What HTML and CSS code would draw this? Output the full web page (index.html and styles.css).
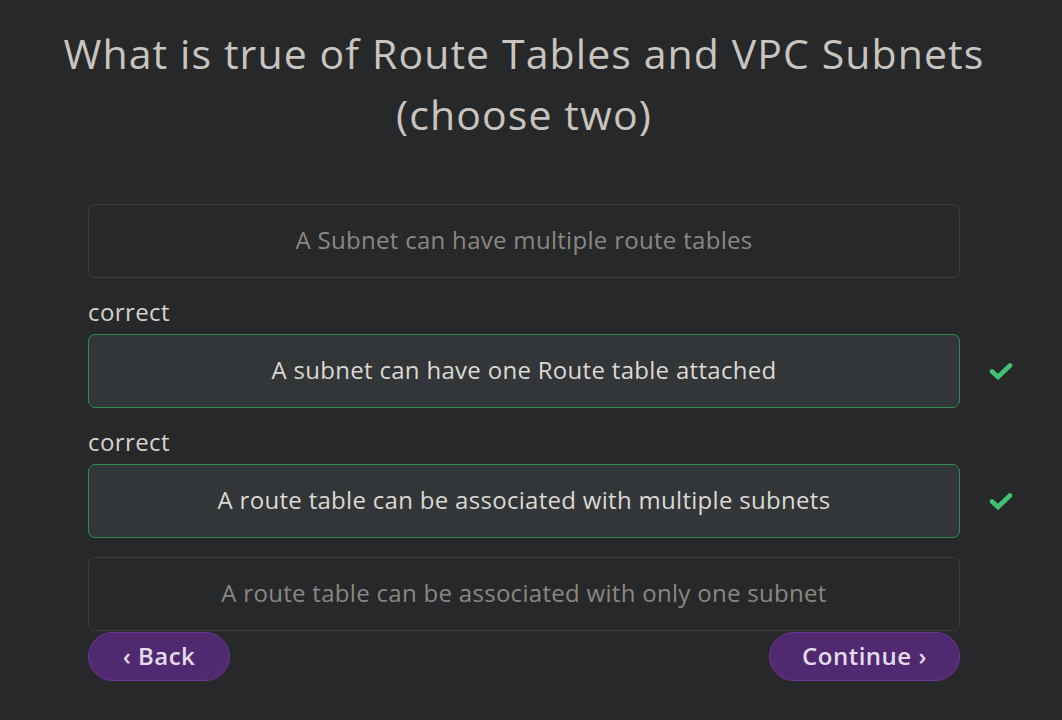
FILE: index.html
```html
<!DOCTYPE html>
<html>
<head>
<meta charset="utf-8">
<link rel="stylesheet" href="styles.css">
</head>
<body>
<main class="quiz">
  <h1 class="question">What is true of Route Tables and VPC Subnets (choose two)</h1>
  <div class="options">
    <div class="row">
      <div class="option">A Subnet can have multiple route tables</div>
    </div>
    <div class="row">
      <div class="label">correct</div>
      <div class="line">
        <div class="option correct">A subnet can have one Route table attached</div>
        <svg class="check" viewBox="0 0 24 18" width="24" height="18"><path d="M3 9.5 L9 15 L21 3.5" fill="none" stroke="#3fc273" stroke-width="4.6" stroke-linecap="round" stroke-linejoin="miter"/></svg>
      </div>
    </div>
    <div class="row">
      <div class="label">correct</div>
      <div class="line">
        <div class="option correct">A route table can be associated with multiple subnets</div>
        <svg class="check" viewBox="0 0 24 18" width="24" height="18"><path d="M3 9.5 L9 15 L21 3.5" fill="none" stroke="#3fc273" stroke-width="4.6" stroke-linecap="round" stroke-linejoin="miter"/></svg>
      </div>
    </div>
    <div class="row last">
      <div class="option">A route table can be associated with only one subnet</div>
    </div>
  </div>
  <div class="nav">
    <button class="btn back">‹ Back</button>
    <button class="btn next">Continue ›</button>
  </div>
</main>
</body>
</html>
```
FILE: styles.css
```css
html, body {
  margin: 0;
  padding: 0;
  background: #27282a;
}
body {
  font-family: "Open Sans", Lato, sans-serif;
  color: #d6d2cd;
}
.quiz {
  width: 872px;
  margin-left: 88px;
}
.question {
  margin: 23px -40px 0;
  font-weight: 400;
  font-size: 41px;
  letter-spacing: 1.1px;
  line-height: 61px;
  text-align: center;
  color: #c9c4bf;
}
.options {
  margin-top: 59px;
  display: flex;
  flex-direction: column;
}
.row {
  margin-bottom: 19px;
}
.row.last {
  margin-bottom: 1px;
}
.label {
  font-size: 24px;
  letter-spacing: 0.4px;
  line-height: 25px;
  padding-top: 2px;
  margin-bottom: 10px;
  color: #d6d2cd;
}
.line {
  position: relative;
}
.option {
  box-sizing: border-box;
  height: 74px;
  padding-bottom: 3px;
  border: 1px solid #3b3c3e;
  border-radius: 7px;
  display: flex;
  align-items: center;
  justify-content: center;
  font-size: 24px;
  letter-spacing: 0.3px;
  color: #8b8782;
}
.option.correct {
  background: #323638;
  border-color: #2f8a52;
  color: #dcd8d3;
}
.check {
  position: absolute;
  left: 901px;
  top: 28px;
}
.nav {
  display: flex;
  justify-content: space-between;
}
.btn {
  box-sizing: border-box;
  height: 49px;
  border-radius: 25px;
  background: #512970;
  border: 1px solid #6c3496;
  color: #e1dcea;
  font-family: "Open Sans", Lato, sans-serif;
  font-size: 24px;
  letter-spacing: 0.5px;
  font-weight: 600;
  padding: 0 0 3px;
}
.back { width: 142px; }
.next { width: 191px; }
```
